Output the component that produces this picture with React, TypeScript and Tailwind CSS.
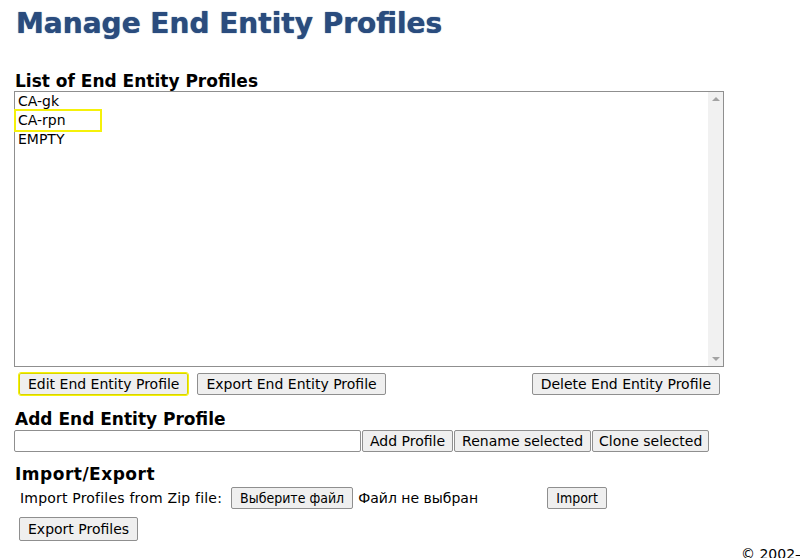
import React from "react";

const btn =
	"h-[22px] bg-[#efefef] border border-[#8f8f8f] rounded-[2px] leading-none text-black whitespace-nowrap";

export default function App() {
	const profiles = ["CA-gk", "CA-rpn", "EMPTY"];

	return (
		<div className="relative h-[558px] bg-white text-black font-['DejaVu_Sans',sans-serif] pl-[14px] overflow-hidden">
			<h1 className="pt-[6px] text-[28px] font-bold leading-[36px] text-[#2a4c7e] pl-[2px] [text-shadow:0_0_1px_#2a4c7e]">
				Manage End Entity Profiles
			</h1>

			<h3 className="mt-[29px] text-[17px] font-bold leading-[20px] pl-[1px]">
				List of End Entity Profiles
			</h3>
			<div className="w-[710px]">
				<div className="flex h-[276px] border border-[#8f8f8f]">
					<div className="flex-1 pl-[3px] text-[14px]">
						{profiles.map((p) => (
							<div
								key={p}
								className={`h-[19px] leading-[19px] ${
									p === "CA-rpn"
										? "outline outline-2 outline-[#f5f10a] -ml-[2px] pl-[2px] w-[84px]"
										: ""
								}`}>
								{p}
							</div>
						))}
					</div>
					<div className="w-[15px] bg-[#f1f1f1] flex flex-col justify-between items-center py-[5px]">
						<div className="w-0 h-0 border-l-[4px] border-r-[4px] border-b-[4px] border-l-transparent border-r-transparent border-b-[#a3a3a3]" />
						<div className="w-0 h-0 border-l-[4px] border-r-[4px] border-t-[4px] border-l-transparent border-r-transparent border-t-[#a3a3a3]" />
					</div>
				</div>
				<div className="flex justify-between pl-[5px] pr-[4px] mt-[6px] text-[14px]">
					<div className="flex gap-[9px]">
						<button className={`${btn} px-[8px] outline outline-1 outline-[#f5f10a] border-[#d8d400]`}>
							Edit End Entity Profile
						</button>
						<button className={`${btn} px-[8px]`}>Export End Entity Profile</button>
					</div>
					<button className={`${btn} px-[8px]`}>Delete End Entity Profile</button>
				</div>
			</div>

			<h3 className="mt-[14px] text-[17px] font-bold leading-[20px] pl-[1px]">
				Add End Entity Profile
			</h3>
			<div className="flex gap-[1px] mt-[1px] text-[14px]">
				<input
					type="text"
					className="w-[347px] h-[22px] border border-[#8f8f8f] rounded-[2px] bg-white px-[2px]"
				/>
				<button className={`${btn} px-[7px]`}>Add Profile</button>
				<button className={`${btn} px-[7px]`}>Rename selected</button>
				<button className={`${btn} px-[6px]`}>Clone selected</button>
			</div>

			<h3 className="mt-[12px] text-[17px] font-bold leading-[20px] pl-[1px] tracking-[0.5px]">
				Import/Export
			</h3>
			<div className="flex items-center pl-[6px] mt-[3px] text-[14px]">
				<span className="tracking-[0.2px]">Import Profiles from Zip file:</span>
				<button className={`${btn} h-[21px] ml-[9px] px-[8px] font-['DejaVu_Sans_Condensed',sans-serif]`}>
					Выберите файл
				</button>
				<span className="ml-[5px] w-[189px]">Файл не выбран</span>
				<button className={`${btn} px-[8px] font-['DejaVu_Sans_Condensed',sans-serif]`}>
					Import
				</button>
			</div>
			<div className="pl-[5px] mt-[8px] text-[14px]">
				<button className={`${btn} h-[24px] px-[8px]`}>Export Profiles</button>
			</div>

			<div className="absolute left-[741px] top-[547px] text-[14px] leading-none whitespace-nowrap">
				© 2002–2023 PrimeKey Solutions AB
			</div>
		</div>
	);
}
